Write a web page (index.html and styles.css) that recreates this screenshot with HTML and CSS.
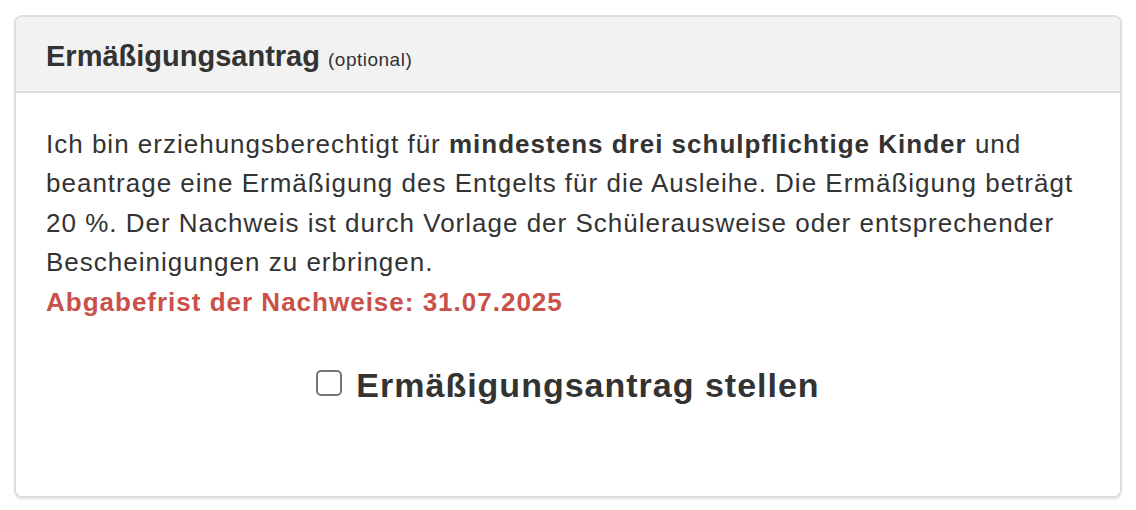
FILE: index.html
```html
<!DOCTYPE html>
<html lang="de">
  <head>
    <meta charset="UTF-8" />
    <meta name="viewport" content="width=device-width,initial-scale=1" />
    <title>Ermäßigungsantrag</title>
    <link rel="stylesheet" href="styles.css">
  </head>
  <body>
    <section class="panel">
      <header class="panel-heading">
        <h2 class="panel-title">Ermäßigungsantrag <small>(optional)</small></h2>
      </header>
      <div class="panel-body">
        <p>
          Ich bin erziehungsberechtigt für <strong>mindestens drei schulpflichtige Kinder</strong> und
          beantrage eine Ermäßigung des Entgelts für die Ausleihe. Die Ermäßigung beträgt
          20 %. Der Nachweis ist durch Vorlage der Schülerausweise oder entsprechender
          Bescheinigungen zu erbringen.
          <br>
          <strong class="text-danger">Abgabefrist der Nachweise: 31.07.2025</strong>
        </p>
        <label class="checkbox">
          <input type="checkbox" name="discount">
          <span>Ermäßigungsantrag stellen</span>
        </label>
      </div>
    </section>
  </body>
</html>
```

FILE: styles.css
```css
:root {
  --color-text: #333333;
  --color-border: #dddddd;
  --color-heading: #f2f2f2;
  --color-danger: #c9514a;
  --font-family: "Liberation Sans", Arial, Helvetica, sans-serif;
}

* {
  box-sizing: border-box;
  margin: 0;
  padding: 0;
}

body {
  background-color: #ffffff;
  color: var(--color-text);
  font-family: var(--font-family);
  font-size: 26px;
  letter-spacing: 1px;
  line-height: 39.4px;
  padding: 15px 14px;
}

.panel {
  border: 2px solid var(--color-border);
  border-radius: 8px;
  box-shadow: 0 2px 3px rgba(0, 0, 0, 0.08);
  overflow: hidden;
}

.panel-heading {
  background-color: var(--color-heading);
  border-bottom: 2px solid var(--color-border);
  padding: 22px 30px 18px;
}

.panel-title {
  font-size: 29px;
  font-weight: bold;
  letter-spacing: 0;
  line-height: 34px;
}

.panel-title small {
  font-size: 19px;
  font-weight: normal;
  letter-spacing: 0.5px;
  line-height: 1;
}

.panel-body {
  display: flex;
  flex-direction: column;
  padding: 32px 30px 87px;
}

.text-danger {
  color: var(--color-danger);
}

.checkbox {
  align-items: center;
  align-self: center;
  column-gap: 14px;
  display: flex;
  font-size: 34px;
  font-weight: bold;
  letter-spacing: 1px;
  line-height: 48px;
  margin-top: 39px;
}

.checkbox input {
  appearance: none;
  border: 2px solid #767676;
  border-radius: 5px;
  height: 26px;
  margin-top: -4px;
  width: 26px;
}
```
